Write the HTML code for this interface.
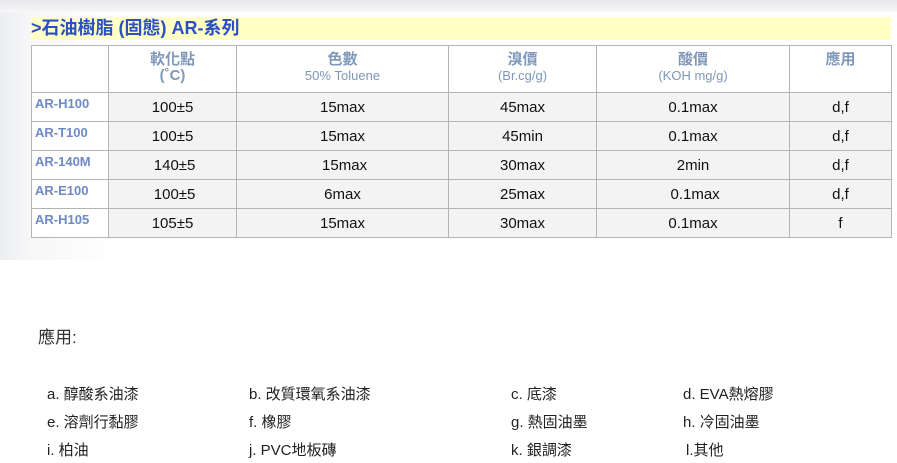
<!DOCTYPE html>
<html><head><meta charset="utf-8"><style>
body{margin:0;width:897px;height:463px;background:#fff;position:relative;overflow:hidden;font-family:"Liberation Sans","Noto Sans CJK TC",sans-serif;}
.bg{position:absolute;left:0;top:0;width:897px;height:260px;background:linear-gradient(90deg,#eceef0 0,#f7f7f8 30px,#fff 120px);}
.top{position:absolute;left:0;top:0;width:897px;height:12px;background:linear-gradient(180deg,#e8e9eb,#f6f6f7);}
.bar{position:absolute;left:31px;top:17px;width:860px;height:23px;background:#ffffc6;color:#2c4fc4;font-weight:bold;font-size:18px;line-height:23px;}
table{position:absolute;left:31px;top:45px;border-collapse:collapse;width:861px;font-size:15px;}
td,th{border:1px solid #b4b4b4;text-align:center;padding:0;}
th{height:40px;background:#fff;color:#7f97b8;font-weight:bold;font-size:15px;line-height:16px;vertical-align:top;padding-top:6px;}
th small{font-size:13px;font-weight:normal;}
td{height:26px;line-height:17px;background:#f3f3f3;color:#111;}
td.n{background:#fff;color:#6d8ac6;font-weight:bold;font-size:13px;text-align:left;padding-left:3px;vertical-align:top;padding-top:2px;}
.h{position:absolute;left:38px;top:323px;font-size:17px;color:#333;}
.l{position:absolute;font-size:15px;color:#222;}
</style></head><body>
<div class="bg"></div><div class="top"></div>
<div class="bar">&gt;石油樹脂 (固態) AR-系列</div>
<table>
<tr><th style="width:76px"></th><th style="width:127px">軟化點<br>(˚C)</th><th style="width:211px">色數<br><small>50% Toluene</small></th><th style="width:147px">溴價<br><small>(Br.cg/g)</small></th><th style="width:192px">酸價<br><small>(KOH mg/g)</small></th><th>應用</th></tr>
<tr><td class="n">AR-H100</td><td>100±5</td><td>15max</td><td>45max</td><td>0.1max</td><td>d,f</td></tr>
<tr><td class="n">AR-T100</td><td>100±5</td><td>15max</td><td>45min</td><td>0.1max</td><td>d,f</td></tr>
<tr><td class="n">AR-140M</td><td>&nbsp;140±5</td><td>&nbsp;15max</td><td>30max</td><td>2min</td><td>d,f</td></tr>
<tr><td class="n">AR-E100</td><td>&nbsp;100±5</td><td>6max</td><td>25max</td><td>&nbsp;0.1max</td><td>d,f</td></tr>
<tr><td class="n">AR-H105</td><td>105±5</td><td>15max</td><td>30max</td><td>0.1max</td><td>f</td></tr>
</table>
<div class="h">應用:</div>
<div class="l" style="left:47px;top:383px">a. 醇酸系油漆</div>
<div class="l" style="left:249px;top:383px">b. 改質環氧系油漆</div>
<div class="l" style="left:511px;top:383px">c. 底漆</div>
<div class="l" style="left:683px;top:383px">d. EVA熱熔膠</div>
<div class="l" style="left:47px;top:411px">e. 溶劑行黏膠</div>
<div class="l" style="left:249px;top:411px">f. 橡膠</div>
<div class="l" style="left:511px;top:411px">g. 熱固油墨</div>
<div class="l" style="left:683px;top:411px">h. 冷固油墨</div>
<div class="l" style="left:47px;top:439px">i. 柏油</div>
<div class="l" style="left:249px;top:439px">j. PVC地板磚</div>
<div class="l" style="left:511px;top:439px">k. 銀調漆</div>
<div class="l" style="left:686px;top:439px">l.其他</div>
</body></html>
